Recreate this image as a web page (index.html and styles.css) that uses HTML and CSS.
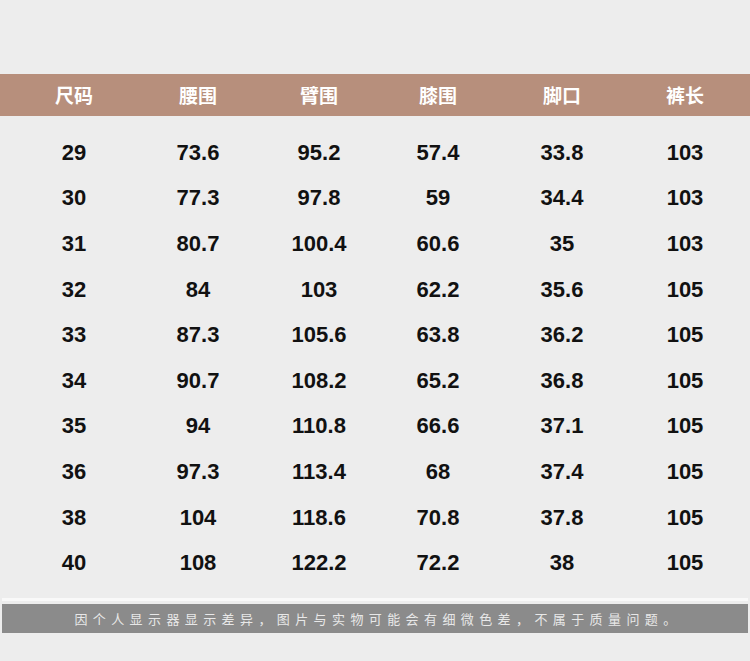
FILE: index.html
```html
<!DOCTYPE html>
<html lang="zh">
<head>
<meta charset="utf-8">
<link rel="stylesheet" href="styles.css">
</head>
<body>
<div class="page">
  <div class="head">
    <div>尺码</div><div>腰围</div><div>臂围</div><div>膝围</div><div>脚口</div><div>裤长</div>
  </div>
  <div class="rows">
    <div class="row"><div>29</div><div>73.6</div><div>95.2</div><div>57.4</div><div>33.8</div><div>103</div></div>
    <div class="row"><div>30</div><div>77.3</div><div>97.8</div><div>59</div><div>34.4</div><div>103</div></div>
    <div class="row"><div>31</div><div>80.7</div><div>100.4</div><div>60.6</div><div>35</div><div>103</div></div>
    <div class="row"><div>32</div><div>84</div><div>103</div><div>62.2</div><div>35.6</div><div>105</div></div>
    <div class="row"><div>33</div><div>87.3</div><div>105.6</div><div>63.8</div><div>36.2</div><div>105</div></div>
    <div class="row"><div>34</div><div>90.7</div><div>108.2</div><div>65.2</div><div>36.8</div><div>105</div></div>
    <div class="row"><div>35</div><div>94</div><div>110.8</div><div>66.6</div><div>37.1</div><div>105</div></div>
    <div class="row"><div>36</div><div>97.3</div><div>113.4</div><div>68</div><div>37.4</div><div>105</div></div>
    <div class="row"><div>38</div><div>104</div><div>118.6</div><div>70.8</div><div>37.8</div><div>105</div></div>
    <div class="row"><div>40</div><div>108</div><div>122.2</div><div>72.2</div><div>38</div><div>105</div></div>
  </div>
  <div class="stripe"></div>
  <div class="note">因个人显示器显示差异，图片与实物可能会有细微色差，不属于质量问题。</div>
</div>
</body>
</html>
```

FILE: styles.css
```css
html, body {
  margin: 0;
  padding: 0;
  background: #ededed;
}
.page {
  width: 750px;
  height: 661px;
  padding-top: 74px;
  box-sizing: border-box;
  font-family: "Liberation Sans", "Noto Sans CJK SC", sans-serif;
}
.head,
.row {
  display: grid;
  grid-template-columns: 122px 126px 116px 122px 126px 120px;
  padding-left: 13px;
  align-items: center;
}
.head {
  height: 42px;
  background: #b78f7c;
  color: #ffffff;
  font-family: "Noto Sans CJK SC", sans-serif;
  font-weight: bold;
  font-size: 19px;
  line-height: 42px;
}
.head div,
.row div {
  text-align: center;
}
.rows {
  padding-top: 14px;
  display: flex;
  flex-direction: column;
}
.row {
  height: 45.6px;
  font-size: 22px;
  font-weight: bold;
  color: #111111;
}
.stripe {
  margin-top: 12px;
  height: 3px;
  background: #f9f9f9;
  margin-left: 2px;
  margin-right: 2px;
}
.note {
  margin-top: 3px;
  margin-left: 2px;
  margin-right: 2px;
  padding-left: 6px;
  height: 29px;
  background: #8b8b8b;
  color: #e8e8e8;
  font-family: "Noto Sans CJK SC", sans-serif;
  font-size: 13px;
  letter-spacing: 5.4px;
  line-height: 29px;
  text-align: center;
}
```
